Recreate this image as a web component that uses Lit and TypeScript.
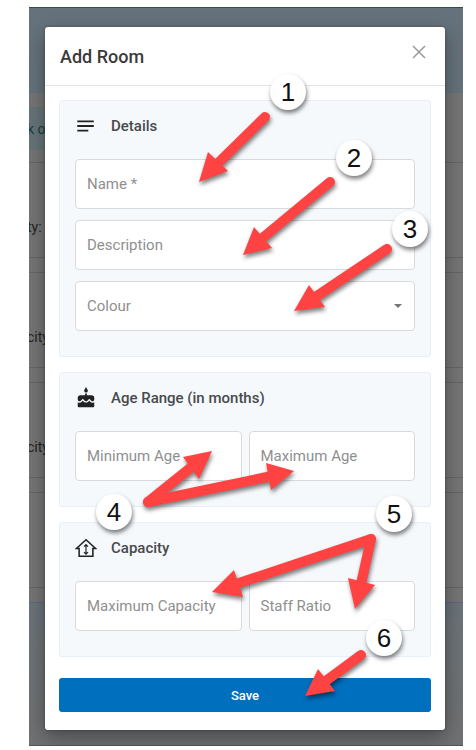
import { LitElement, html, css, svg } from "lit";
import { customElement, property } from "lit/decorators.js";

type Point = [number, number];

interface Arrow {
  tail: Point;
  neck: Point;
  head: [Point, Point, Point];
}

const ARROWS: Arrow[] = [
  { tail: [265, 117], neck: [215, 166], head: [[199, 182], [208, 152], [228, 171]] },
  { tail: [330, 182], neck: [260, 240], head: [[243, 255], [254, 227], [272, 248]] },
  { tail: [387, 249], neck: [314, 298], head: [[294, 311], [309, 285], [325, 307]] },
  { tail: [148, 502], neck: [194, 465], head: [[212, 451], [183, 457], [199, 479]] },
  { tail: [148, 502], neck: [272, 476], head: [[294, 471], [266, 463], [271, 490]] },
  { tail: [371, 539], neck: [236, 584], head: [[212, 592], [234, 570], [243, 597]] },
  { tail: [371, 539], neck: [361, 584], head: [[355, 609], [348, 578], [375, 585]] },
  { tail: [361, 655], neck: [323, 683], head: [[305, 696], [318, 669], [335, 691]] },
];

const STEPS: Point[] = [
  [288, 92],
  [354, 158],
  [410, 229],
  [114, 512],
  [394, 514],
  [384, 638],
];

const ICONS = {
  notes: svg`<path fill="currentColor" d="M2.500 6h18v2h-18zM2.500 11h18v2h-18zM2.500 16h12v2h-12z"/>`,
  cake: svg`<path fill="currentColor" d="M12 6a2 2 0 0 0 2-2c0-.4-.1-.7-.3-1L12 0l-1.700 3c-.2.3-.3.600-.3 1a2 2 0 0 0 2 2zm4.600 10-1.100-1.100-1.100 1.100c-1.300 1.300-3.600 1.300-4.900 0l-1-1.100L7.400 16A3.500 3.500 0 0 1 3 16.500V21c0 .6.4 1 1 1h16c.6 0 1-.4 1-1v-4.500a3.500 3.500 0 0 1-4.400-.5zM18 9h-5V7h-2v2H6a3 3 0 0 0-3 3v1.500C3 14.600 3.900 15.500 5 15.500c.5 0 1-.2 1.400-.6L8.500 12.800l2.100 2.100c.8.8 2.100.8 2.900 0l2.100-2.100 2.100 2.100c.4.4.9.6 1.400.6 1 0 1.900-.9 1.900-2V12a3 3 0 0 0-3-3z"/>`,
  house: svg`<g fill="none" stroke="currentColor" stroke-width="1.700"><path d="M1.500 12.500 12 3l10.500 9.500h-3V21h-15v-8.500z"/><path stroke-width="1.300" d="M12 8.500v10M9.800 10.500 12 8.300l2.200 2.200M9.800 16.500l2.200 2.200 2.200-2.200"/></g>`,
};

@customElement("form-section")
export class FormSection extends LitElement {
  @property() heading = "";
  @property() icon: keyof typeof ICONS = "notes";

  static styles = css`
    :host {
      display: block;
    }
    .section {
      box-sizing: border-box;
      margin: 0;
      padding: 0 15px 25px;
      border: 1px solid #e8effc;
      border-radius: 3px;
      background: #f5f9fc;
    }
    .heading {
      display: flex;
      align-items: center;
      gap: 14px;
      height: 50px;
      margin: 0;
      padding-bottom: 8px;
      font-size: 15px;
      font-weight: 500;
      color: #484a4c;
    }
    .icon {
      width: 22px;
      height: 22px;
      color: #222;
    }
  `;

  render() {
    return html`<section class="section">
      <h3 class="heading">
        <svg class="icon" viewBox="0 0 24 24" aria-hidden="true">${ICONS[this.icon]}</svg>
        ${this.heading}
      </h3>
      <slot></slot>
    </section>`;
  }
}

@customElement("app-root")
export class AppRoot extends LitElement {
  static styles = css`
    :host {
      display: block;
      box-sizing: border-box;
      position: relative;
      min-height: 100vh;
      padding: 7px 13px 4px 29px;
      background: #fff;
      font-family: Roboto, "Liberation Sans", sans-serif;
    }
    .stage {
      display: grid;
      overflow: hidden;
    }
    .page,
    .dialog {
      grid-area: 1 / 1;
      min-width: 0;
    }
    .page {
      display: flex;
      flex-direction: column;
      box-sizing: border-box;
      border-bottom: 1px solid #555;
      background: #757575;
      font-size: 14px;
      color: #222;
      text-indent: -2px;
      white-space: nowrap;
    }
    .banner {
      height: 85px;
      border-top: 1px solid #2b4c6b;
      background: #65727b;
    }
    .crumb {
      display: flex;
      align-items: center;
      width: 60px;
      height: 43px;
      margin: 14px 0 12px;
      background: #667477;
      color: #173a4a;
    }
    .cards {
      display: grid;
      gap: 14px;
    }
    .card {
      display: flex;
      align-items: center;
      box-sizing: border-box;
      height: 96px;
      padding-top: 34px;
      border: solid #656565;
      border-width: 1px 0;
    }
    .footer {
      flex: 1;
      margin-top: 14px;
      border-top: 1px solid #5e6780;
      background: linear-gradient(#6b7379, #707172);
    }
    .dialog {
      z-index: 1;
      margin: 20px 18px 16px 16px;
      border-radius: 3px;
      background: #fff;
      box-shadow: 0 8px 20px rgba(0, 0, 0, 0.35), 0 0 3px rgba(0, 0, 0, 0.3);
    }
    .header {
      display: flex;
      align-items: center;
      justify-content: space-between;
      height: 58px;
      padding: 0 18px 0 15px;
      border-bottom: 1px solid #e4e4e4;
    }
    .title {
      margin: 0;
      font-size: 18px;
      font-weight: 500;
      color: #3a3a3a;
    }
    .close {
      display: grid;
      place-items: center;
      width: 16px;
      height: 16px;
      margin-bottom: 8px;
      padding: 0;
      border: 0;
      background: none;
      color: #999;
    }
    .cross {
      width: 14px;
      height: 14px;
    }
    .form {
      display: grid;
      gap: 15px;
      padding: 14px 14px 18px;
    }
    .fields {
      display: grid;
      gap: 11px;
    }
    .pair {
      display: grid;
      grid-template-columns: 1fr 1fr;
      gap: 7px;
    }
    .field {
      display: grid;
      align-items: center;
      min-width: 0;
    }
    .control,
    .label,
    .caret {
      grid-area: 1 / 1;
    }
    .control {
      appearance: none;
      box-sizing: border-box;
      width: 100%;
      height: 50px;
      padding: 0 12px;
      border: 1px solid #d9dadb;
      border-radius: 4px;
      background: #fff;
      font: inherit;
      font-size: 15px;
      color: #333;
    }
    .label {
      z-index: 1;
      padding-left: 12px;
      font-size: 15px;
      color: #8f8f8f;
      pointer-events: none;
    }
    .control:focus + .label,
    .control:not(:placeholder-shown) + .typed {
      align-self: start;
      font-size: 10px;
    }
    .caret {
      z-index: 1;
      justify-self: end;
      margin-right: 13px;
      border: solid transparent;
      border-width: 4px 4px 0;
      border-top-color: #757575;
      pointer-events: none;
    }
    .save {
      height: 34px;
      margin-top: 6px;
      padding: 0;
      border: 0;
      border-radius: 3px;
      background: #006fbd;
      font: inherit;
      font-size: 13px;
      font-weight: 500;
      color: #fff;
    }
    .notes {
      position: absolute;
      top: 0;
      left: 0;
      z-index: 2;
      width: 476px;
      height: 750px;
      pointer-events: none;
    }
    .arrow {
      fill: #ff4343;
      stroke: #ff4343;
    }
    .arrows,
    .badge {
      filter: drop-shadow(1px 3px 2px rgba(0, 0, 0, 0.5));
    }
    .digit {
      font-family: "Liberation Sans", Arial, sans-serif;
      font-size: 26px;
      text-anchor: middle;
      fill: #111;
    }
  `;

  private textField(label: string) {
    return html`<label class="field">
      <input class="control" type="text" placeholder=" " />
      <span class="label typed">${label}</span>
    </label>`;
  }

  private arrow({ tail, neck, head }: Arrow) {
    return svg`<g class="arrow">
      <line x1=${tail[0]} y1=${tail[1]} x2=${neck[0]} y2=${neck[1]} stroke-width="10" stroke-linecap="round"/>
      <polygon points=${head.map((p) => p.join(",")).join(" ")} stroke="none"/>
    </g>`;
  }

  render() {
    return html`
      <div class="stage">
        <div class="page" aria-hidden="true">
          <div class="banner"></div>
          <div class="crumb">k o</div>
          <div class="cards">
            ${["ty:", "city", "city", ""].map((text) => html`<div class="card">${text}</div>`)}
          </div>
          <div class="footer"></div>
        </div>
        <main class="dialog" role="dialog" aria-labelledby="title">
          <header class="header">
            <h2 class="title" id="title">Add Room</h2>
            <button class="close" type="button" aria-label="Close">
              <svg class="cross" viewBox="0 0 14 14">
                <path d="M1 1l12 12M13 1L1 13" fill="none" stroke="currentColor" stroke-width="1.500" />
              </svg>
            </button>
          </header>
          <form class="form">
            <form-section heading="Details" icon="notes">
              <div class="fields">
                ${this.textField("Name *")} ${this.textField("Description")}
                <label class="field">
                  <select class="control">
                    <option value=""></option>
                  </select>
                  <span class="label">Colour</span>
                  <span class="caret"></span>
                </label>
              </div>
            </form-section>
            <form-section heading="Age Range (in months)" icon="cake">
              <div class="pair">${this.textField("Minimum Age")} ${this.textField("Maximum Age")}</div>
            </form-section>
            <form-section heading="Capacity" icon="house">
              <div class="pair">${this.textField("Maximum Capacity")} ${this.textField("Staff Ratio")}</div>
            </form-section>
            <button class="save" type="button">Save</button>
          </form>
        </main>
      </div>
      <svg class="notes" viewBox="0 0 476 750">
        <g class="arrows">${ARROWS.map((a) => this.arrow(a))}</g>
        ${STEPS.map(
          ([x, y], i) => svg`<g>
            <circle class="badge" cx=${x} cy=${y} r="18" fill="#fff"/>
            <text class="digit" x=${x} y=${y + 9}>${i + 1}</text>
          </g>`
        )}
      </svg>
    `;
  }
}
